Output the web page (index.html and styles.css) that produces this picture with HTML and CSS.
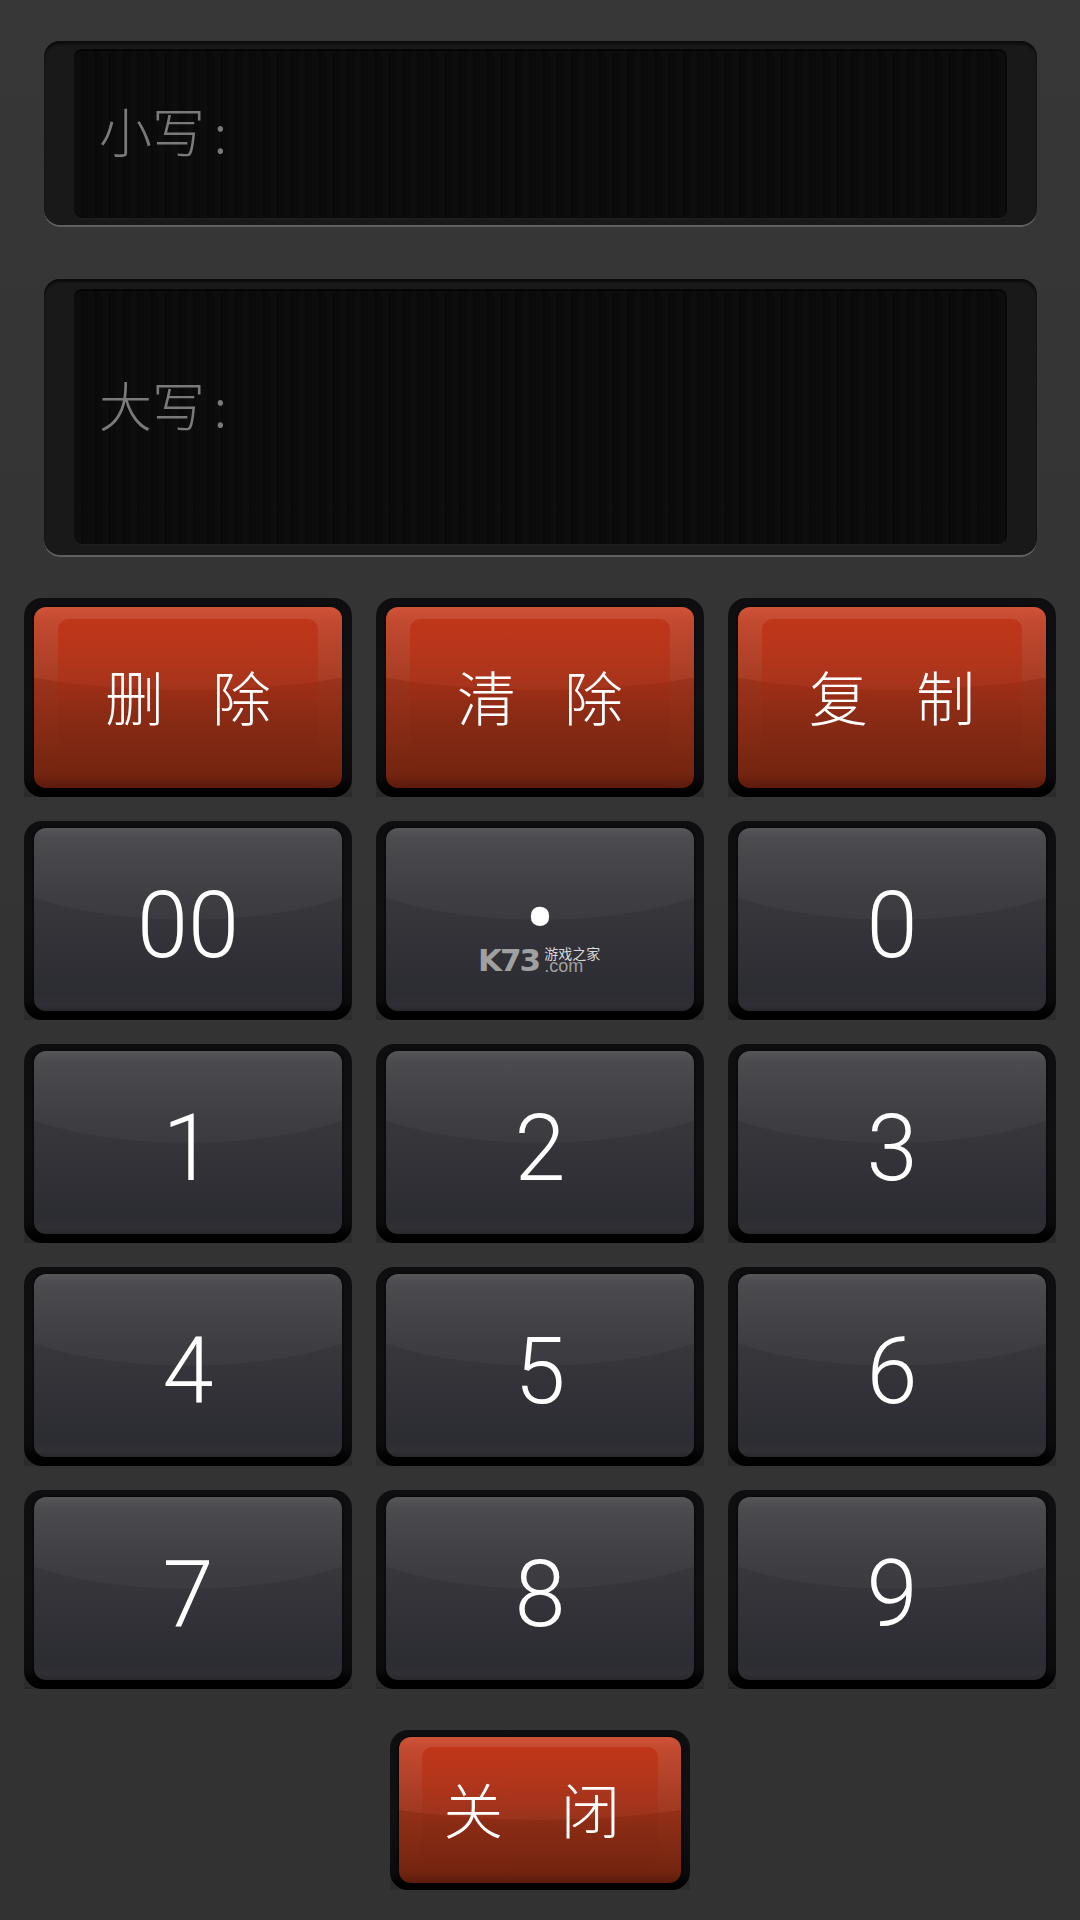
FILE: index.html
```html
<!DOCTYPE html>
<html lang="zh-CN">
<head>
    <meta charset="UTF-8">
    <meta name="viewport" content="width=device-width, initial-scale=1.0, user-scalable=no">
    <title>大写转换</title>
    <link rel="stylesheet" href="styles.css">
</head>
<body>

    <div class="display display-small">
        <div class="screen"><span class="screen-label">小写 :</span></div>
    </div>

    <div class="display display-big">
        <div class="screen"><span class="screen-label">大写 :</span></div>
    </div>

    <div class="keypad">
        <button class="key key-red"><span class="well"><span class="face"><span class="cap">删 除</span></span></span></button>
        <button class="key key-red"><span class="well"><span class="face"><span class="cap">清 除</span></span></span></button>
        <button class="key key-red"><span class="well"><span class="face"><span class="cap">复 制</span></span></span></button>

        <button class="key"><span class="well"><span class="face"><span class="cap">00</span></span></span></button>
        <button class="key key-dot">
            <span class="well"><span class="face"><span class="cap"><span class="dot">•</span></span></span></span>
            <span class="watermark">
                <span class="wm-logo">K73</span>
                <span class="wm-text"><span class="wm-name">游戏之家</span><span class="wm-com">.com</span></span>
            </span>
        </button>
        <button class="key"><span class="well"><span class="face"><span class="cap">0</span></span></span></button>

        <button class="key"><span class="well"><span class="face"><span class="cap">1</span></span></span></button>
        <button class="key"><span class="well"><span class="face"><span class="cap">2</span></span></span></button>
        <button class="key"><span class="well"><span class="face"><span class="cap">3</span></span></span></button>

        <button class="key"><span class="well"><span class="face"><span class="cap">4</span></span></span></button>
        <button class="key"><span class="well"><span class="face"><span class="cap">5</span></span></span></button>
        <button class="key"><span class="well"><span class="face"><span class="cap">6</span></span></span></button>

        <button class="key"><span class="well"><span class="face"><span class="cap">7</span></span></span></button>
        <button class="key"><span class="well"><span class="face"><span class="cap">8</span></span></span></button>
        <button class="key"><span class="well"><span class="face"><span class="cap">9</span></span></span></button>
    </div>

    <div class="close-row">
        <button class="key key-red key-close"><span class="well"><span class="face"><span class="cap">关 闭</span></span></span></button>
    </div>

</body>
</html>
```

FILE: styles.css
```css
html, body {
    margin: 0;
    padding: 0;
}
body {
    width: 1080px;
    height: 1920px;
    overflow: hidden;
    background: linear-gradient(#373737, #343434 30%, #323232);
    font-family: Roboto, "Noto Sans CJK SC", sans-serif;
    box-sizing: border-box;
    padding-top: 41px;
}

/* top displays */
.display {
    margin: 0 43px 0 44px;
    box-sizing: border-box;
    background: #19191a;
    border-radius: 16px;
    padding: 8px 30px 7px;
    box-shadow: inset 0 3px 2px #0c0c0c, inset 0 -2px 0 #5f5f5f;
    display: flex;
}
.display-small {
    height: 186px;
}
.display-big {
    height: 278px;
    margin-top: 52px;
    padding-top: 10px;
    padding-bottom: 11px;
}
.screen {
    flex: 1;
    display: flex;
    align-items: center;
    padding-left: 25px;
    padding-bottom: 10px;
    border-radius: 8px;
    background:
        repeating-linear-gradient(90deg, rgba(255,255,255,0.008) 0 7px, rgba(0,0,0,0.22) 7px 9px, rgba(255,255,255,0) 9px 14px),
        #0b0b0c;
    box-shadow: inset 0 2px 0 #060606, inset 0 -2px 0 #1d1d1e;
}
.display-big .screen {
    padding-bottom: 27px;
}
.screen-label {
    font-family: "Noto Sans CJK SC", sans-serif;
    font-weight: 300;
    font-size: 53px;
    line-height: 60px;
    word-spacing: -3px;
    color: #7a7a7a;
}

/* keys */
.keypad {
    display: grid;
    grid-template-columns: repeat(3, 328px);
    grid-auto-rows: 199px;
    gap: 24px;
    margin: 41px 0 0 24px;
}
.key {
    display: block;
    position: relative;
    width: 100%;
    height: 100%;
    padding: 0;
    border: 0;
    overflow: hidden;
    background: linear-gradient(rgba(0,0,0,0) 85%, #2a2a2a);
    color: #fff;
    font-family: inherit;
}
.well {
    display: block;
    height: 100%;
    box-sizing: border-box;
    padding: 7px 10px 9px;
    border-radius: 18px;
    background: linear-gradient(#0e0e10, #111113 50%, #0b0b0d 90%, #000 97%);
}
.face {
    display: flex;
    height: 100%;
    box-sizing: border-box;
    padding: 12px 24px;
    border-radius: 12px;
    box-shadow: 0 0 3px #000;
    background:
        radial-gradient(ellipse 220px 77px at 50% 15px, rgba(255,255,255,0.032) 99%, rgba(255,255,255,0) 100%),
        linear-gradient(#505055, #454549 6%, #37373c 38%, #2c2c33 90%, #2f2f34 97%, #28282c);
}
.cap {
    flex: 1;
    display: flex;
    align-items: center;
    justify-content: center;
    padding-top: 13px;
    font-weight: 300;
    font-size: 92px;
    line-height: 1;
}

.key-dot .cap {
    padding: 0;
    align-items: flex-start;
}
.dot {
    display: block;
    margin-top: 49px;
    font-size: 100px;
    line-height: 60px;
}
.watermark {
    position: absolute;
    left: 102px;
    top: 124px;
    display: flex;
    gap: 5px;
    color: #a0a0a0;
}
.wm-logo {
    font-family: "DejaVu Sans", sans-serif;
    font-weight: bold;
    font-size: 31px;
    line-height: 30px;
    letter-spacing: -2px;
}
.wm-text {
    display: flex;
    flex-direction: column;
    align-items: flex-start;
    padding-top: 2px;
}
.wm-name {
    font-family: "Noto Sans CJK SC", sans-serif;
    font-size: 14px;
    line-height: 13px;
    color: #d8d8d8;
}
.wm-com {
    font-family: "Liberation Sans", sans-serif;
    font-size: 18px;
    line-height: 13px;
}

.key-red .well {
    padding-top: 9px;
}
.key-red .face {
    background:
        radial-gradient(ellipse 260px 62px at 50% 21px, rgba(255,130,100,0.12) 99%, rgba(255,130,100,0) 100%),
        linear-gradient(#c94c32, #ba4229 8%, #983119 45%, #742510 92%, #5c1a0c);
}
.key-red .cap {
    padding: 0 0 4px;
    border-radius: 10px;
    font-family: "Noto Sans CJK SC", sans-serif;
    font-weight: 300;
    font-size: 59px;
    word-spacing: 35px;
    background: linear-gradient(rgba(190,45,15,0.7), rgba(170,40,15,0.4) 40%, rgba(130,35,15,0.2) 60%, rgba(110,30,15,0.12));
}

.close-row {
    display: flex;
    justify-content: center;
    margin-top: 41px;
}
.key-close {
    width: 300px;
    height: 160px;
}
.key-close .well {
    padding: 7px 9px;
}
.key-close .face {
    padding: 10px 23px;
}
.key-close .cap {
    padding: 0 16px 4px 0;
    font-size: 60px;
    word-spacing: 44px;
}
```
